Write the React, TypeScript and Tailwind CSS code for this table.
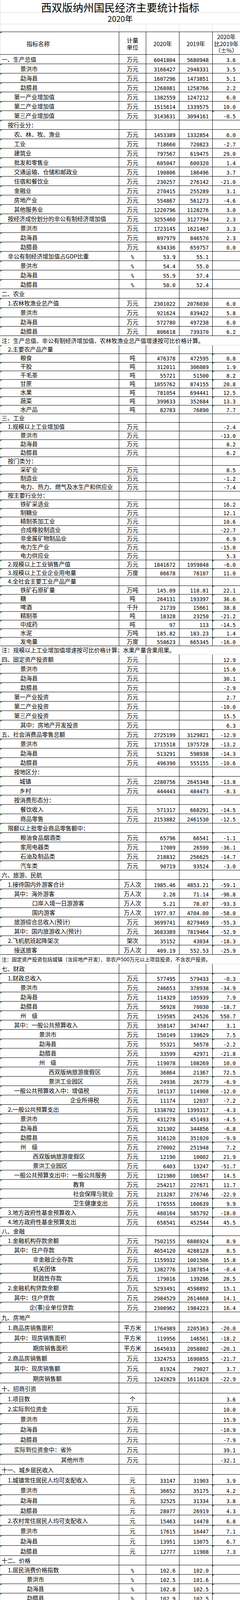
type Row = {
  i?: number;
  n: string;
  u?: string;
  a?: string;
  b?: string;
  p?: string;
  k?: "sec" | "note" | "small" | "end";
  t?: boolean;
};

type Group = { h: number; pt: boolean; rows: Row[] };

const S = (n: string, u = "", a = "", b = "", p = ""): Row => ({ i: 3, n, u, a, b, p, k: "sec" });
const R = (i: number, n: string, u = "", a = "", b = "", p = ""): Row => ({ i, n, u, a, b, p });
const N = (n: string, small = false): Row => ({ n, k: small ? "small" : "note" });

const PL: Record<number, string> = {
  3: "pl-[3px]",
  19: "pl-[19px]",
  36: "pl-[35px]",
  50: "pl-[49px]",
  52: "pl-[51px]",
  68: "pl-[67.5px]",
  75: "pl-[74px]",
  82: "pl-[81px]",
  84: "pl-[83px]",
  100: "pl-[99px]",
  124: "pl-[123.5px]",
  132: "pl-[131px]",
  148: "pl-[147px]",
  156: "pl-[155px]",
  179: "pl-[178.5px]",
  187: "pl-[186px]",
};

const H: Record<number, string> = {
  22: "h-[22px]",
  24: "h-[24px]",
  25: "h-[25px]",
  26: "h-[26px]",
};

const CITY = (i: number, unit: string, vals: [string, string, string][]) =>
  ["景洪市", "勐海县", "勐腊县"].map((n, k) => R(i, n, unit, ...vals[k]));

const GROUPS: Group[] = [
  {
    h: 24,
    pt: false,
    rows: [
      S("一、生产总值", "万元", "6041804", "5680948", "3.6"),
      ...CITY(52, "万元", [
        ["3166427", "2948331", "3.5"],
        ["1607296", "1473851", "5.1"],
        ["1268081", "1258766", "2.2"],
      ]),
      R(36, "第一产业增加值", "万元", "1382559", "1247212", "6.0"),
      R(36, "第二产业增加值", "万元", "1515614", "1339575", "10.0"),
      { ...R(36, "第三产业增加值", "万元", "3143631", "3094161", "-0.5"), t: true },
      R(19, "按行业分："),
      R(36, "农、林、牧、渔业", "万元", "1453389", "1332854", "6.0"),
      R(36, "工业", "万元", "718660", "720823", "-2.7"),
      R(36, "建筑业", "万元", "797567", "619475", "29.0"),
      R(36, "批发和零售业", "万元", "605047", "600320", "1.4"),
      R(36, "交通运输、仓储和邮政业", "万元", "190806", "186496", "3.7"),
      R(36, "住宿和餐饮业", "万元", "230257", "276142", "-21.0"),
      R(36, "金融业", "万元", "270415", "255289", "3.1"),
      R(36, "房地产业", "万元", "554867", "561273", "-4.6"),
      R(36, "其他服务业", "万元", "1220796", "1128276", "3.0"),
      R(19, "按经济成份划分的非公有制经济增加值", "万元", "3255460", "3127794", "2.3"),
      ...CITY(52, "万元", [
        ["1723145", "1621467", "3.3"],
        ["897979", "846570", "2.3"],
        ["634336", "659757", "0.0"],
      ]),
      R(19, "非公有制经济增加值占GDP比重", "%", "53.9", "55.1"),
      ...CITY(52, "%", [
        ["54.4", "55.0", ""],
        ["55.9", "57.4", ""],
        ["50.0", "52.4", ""],
      ]),
      S("二、农业"),
      R(19, "1.农林牧渔业总产值", "万元", "2301022", "2076030", "6.0"),
      ...CITY(52, "万元", [
        ["921624", "839422", "5.8"],
        ["572780", "497238", "6.0"],
        ["806618", "739370", "6.2"],
      ]),
      N("注：生产总值、非公有制经济增加值、农林牧渔业总产值增速按可比价格计算。"),
    ],
  },
  {
    h: 22,
    pt: true,
    rows: [
      R(19, "2.主要农产品产量"),
      R(52, "粮食", "吨", "476378", "472595", "0.8"),
      R(52, "干胶", "吨", "312011", "306089", "1.9"),
      R(52, "干毛茶", "吨", "55721", "51500", "8.2"),
      R(52, "甘蔗", "吨", "1055762", "874155", "20.8"),
      R(52, "水果", "吨", "781054", "694441", "12.5"),
      R(52, "蔬菜", "吨", "399633", "352684", "13.3"),
      R(52, "水产品", "吨", "82783", "76890", "7.7"),
      S("三、工业"),
      R(19, "1.规模以上工业增加值", "万元", "", "", "-2.4"),
      ...CITY(52, "万元", [
        ["", "", "-13.0"],
        ["", "", "8.2"],
        ["", "", "6.2"],
      ]),
      R(19, "按门类分："),
      R(52, "采矿业", "万元", "", "", "8.5"),
      R(52, "制造业", "万元", "", "", "-1.2"),
      R(52, "电力、热力、燃气及水生产和供应业", "万元", "", "", "-7.4"),
      R(19, "按主要行业分："),
      R(52, "铁矿采选业", "万元", "", "", "16.2"),
      R(52, "制糖业", "万元", "", "", "12.1"),
      R(52, "精制茶加工业", "万元", "", "", "10.6"),
      R(52, "合成橡胶制造业", "万元", "", "", "-22.7"),
      R(52, "非金属矿物制品业", "万元", "", "", "6.9"),
      R(52, "电力生产业", "万元", "", "", "-15.0"),
      R(52, "电力供应业", "万元", "", "", "5.3"),
      R(19, "2.规模以上工业销售产值", "万元", "1841672", "1959848", "-6.0"),
      R(19, "3.规模以上工业企业用电量", "万度", "86678", "78107", "11.0"),
      R(19, "4.全社会主要工业产品产量"),
      R(52, "铁矿石原矿量", "万吨", "145.09", "118.81", "22.1"),
      R(52, "糖", "吨", "264131", "193397", "36.6"),
      R(52, "啤酒", "千升", "21739", "15661", "38.8"),
      R(52, "精制茶", "吨", "18328", "23250", "-21.2"),
      R(52, "中成药", "吨", "97", "113", "-14.5"),
      R(52, "水泥", "万吨", "185.82", "183.23", "1.4"),
      R(52, "发电量", "万度", "558623", "665345", "-16.0"),
      N("注：规模以上工业增加值增速按可比价格计算；水果产量含果用果。"),
    ],
  },
  {
    h: 24,
    pt: true,
    rows: [
      S("四、固定资产投资额", "万元", "", "", "12.9"),
      ...CITY(52, "万元", [
        ["", "", "15.6"],
        ["", "", "30.1"],
        ["", "", "-2.9"],
      ]),
      R(36, "第一产业投资", "万元", "", "", "2.7"),
      R(36, "第二产业投资", "万元", "", "", "-10.0"),
      R(36, "第三产业投资", "万元", "", "", "15.5"),
      R(52, "其中：房地产开发投资", "万元", "", "", "6.3"),
      S("五、社会消费品零售总额", "万元", "2725199", "3129821", "-12.9"),
      ...CITY(52, "万元", [
        ["1715518", "1975728", "-13.2"],
        ["513291", "598938", "-14.3"],
        ["496390", "555155", "-10.6"],
      ]),
      R(36, "按地区分："),
      R(50, "城镇", "万元", "2280756", "2645348", "-13.8"),
      R(50, "乡村", "万元", "444443", "484473", "-8.3"),
      R(36, "按消费形态分："),
      R(52, "餐饮收入", "万元", "571317", "668291", "-14.5"),
      R(52, "商品零售", "万元", "2153882", "2461530", "-12.5"),
      R(19, "限额以上批零业商品零售额中："),
      R(52, "粮油食品烟酒类", "万元", "65796", "66541", "-1.1"),
      R(52, "家用电器类", "万元", "17009", "26599", "-36.1"),
      R(52, "石油及制品类", "万元", "218832", "256625", "-14.7"),
      R(52, "汽车类", "万元", "90719", "93524", "-3.0"),
      S("六、旅游、民航"),
      R(19, "1.接待国内外游客合计", "万人次", "1985.46", "4853.21", "-59.1"),
      R(36, "其中：海外游客", "万人次", "2.28", "71.14", "-96.8"),
      R(82, "口岸入境一日游游客", "万人次", "5.21", "78.07", "-93.3"),
      R(82, "国内游客", "万人次", "1977.97", "4704.00", "-58.0"),
      R(36, "旅游综合总收入(预计)", "万元", "3699741", "8279469", "-55.3"),
      R(36, "其中：国内旅游收入(预计)", "万元", "3683389", "7819464", "-52.9"),
      R(19, "2.飞机航班起降架次", "架次", "35152", "43034", "-18.3"),
      R(36, "接送旅客", "万人次", "409.19", "552.53", "-25.9"),
      N("注：固定资产投资包括城镇（含房地产开发）、非农户500万元以上项目投资，不含农户投资。", true),
      S("七、财政"),
      R(19, "1.财政总收入", "万元", "577495", "579433", "-0.3"),
      ...CITY(52, "万元", [
        ["246653", "378938", "-34.9"],
        ["114329", "105939", "7.9"],
        ["56928", "70030", "-18.7"],
      ]),
      R(52, "州　级", "万元", "159585", "24526", "550.7"),
      R(36, "其中：一般公共预算收入", "万元", "358147", "347447", "3.1"),
      ...CITY(100, "万元", [
        ["150149", "139629", "7.5"],
        ["55321", "56578", "-2.2"],
        ["33599", "42971", "-21.8"],
      ]),
      R(100, "州　级", "万元", "119078", "108269", "10.0"),
      R(124, "西双版纳旅游度假区", "万元", "36864", "21367", "72.5"),
      R(124, "景洪工业园区", "万元", "24936", "26779", "-6.9"),
      R(36, "一般公共预算收入中：增值税", "万元", "101137", "114908", "-12.0"),
      R(179, "企业所得税", "万元", "11174", "12037", "-7.2"),
      R(19, "2.一般公共预算支出", "万元", "1338702", "1399317", "-4.3"),
      ...CITY(52, "万元", [
        ["431278", "451493", "-4.5"],
        ["321302", "344856", "-6.8"],
        ["316120", "351020", "-9.9"],
      ]),
      R(52, "州　级", "万元", "270002", "251948", "7.2"),
      R(84, "西双版纳旅游度假区", "万元", "12190", "10002", "21.9"),
      R(84, "景洪工业园区", "万元", "6403", "13247", "-51.7"),
      R(36, "一般公共预算支出中：一般公共服务", "万元", "121980", "106547", "14.5"),
      R(187, "教育", "万元", "254217", "227671", "11.7"),
      R(187, "社会保障与就业", "万元", "213287", "276746", "-22.9"),
      R(187, "卫生健康支出", "万元", "176555", "160639", "9.9"),
      R(19, "3.地方政府性基金预算收入", "万元", "480164", "585792", "-18.0"),
      R(19, "4.地方政府性基金预算支出", "万元", "658541", "452544", "45.5"),
      S("八、金融"),
      R(19, "1.金融机构存款余额", "万元", "7502155", "6886924", "8.9"),
      R(36, "其中：住户存款", "万元", "4654120", "4288128", "8.5"),
      R(84, "非金融企业存款", "万元", "1159932", "1001506", "15.8"),
      R(84, "机关团体", "万元", "1382776", "1387854", "-0.4"),
      R(84, "财政性存款", "万元", "179016", "139286", "28.5"),
    ],
  },
  {
    h: 25,
    pt: true,
    rows: [
      R(19, "2.金融机构贷款余额", "万元", "5293491", "4598892", "15.1"),
      R(36, "其中：住户贷款", "万元", "2984529", "2614668", "14.1"),
      R(75, "企(事)业单位贷款", "万元", "2308962", "1984223", "16.4"),
    ],
  },
  {
    h: 26,
    pt: true,
    rows: [
      S("九、房地产"),
      R(19, "1.商品房销售面积", "平方米", "1764989", "2205363", "-20.0"),
      R(36, "其中：现房销售面积", "平方米", "119956", "146561", "-18.2"),
      R(84, "期房销售面积", "平方米", "1645033", "2058802", "-20.1"),
      R(19, "2.商品房销售额", "万元", "1324753", "1690855", "-21.7"),
      R(36, "其中：现房销售额", "万元", "81924", "79027", "3.7"),
      R(84, "期房销售额", "万元", "1242829", "1611828", "-22.9"),
      S("十、招商引资"),
      R(19, "1.项目数", "个", "", "", "3.6"),
      R(19, "2.实际到位资金", "万元", "", "", "10.0"),
      ...CITY(52, "万元", [
        ["", "", "15.9"],
        ["", "", "-10.9"],
        ["", "", "-7.9"],
      ]),
      R(36, "实际到位资金中：省外", "万元", "", "", "39.1"),
      R(156, "其他州市", "万元", "", "", "-32.1"),
      S("十一、城乡居民收入"),
      R(19, "1.城镇常住居民人均可支配收入", "元", "33147", "31903", "3.9"),
      ...CITY(52, "元", [
        ["36652", "35175", "4.2"],
        ["32525", "31334", "3.8"],
        ["28077", "26919", "4.3"],
      ]),
      R(19, "2.农村常住居民人均可支配收入", "元", "15463", "14478", "6.8"),
      ...CITY(52, "元", [
        ["17615", "16447", "7.1"],
        ["13951", "13075", "6.7"],
        ["12777", "11908", "7.3"],
      ]),
    ],
  },
  {
    h: 24,
    pt: true,
    rows: [
      S("十二、价格"),
      R(19, "1.居民消费价格指数", "%", "102.6", "102.0"),
      ...CITY(68, "%", [
        ["102.5", "101.6", ""],
        ["102.8", "102.5", ""],
        ["102.9", "102.5", ""],
      ]),
      R(52, "其中：服务价格指数", "%", "100.0", "102.1"),
      R(52, "其中：非食品价格指数", "%", "101.0", "100.9"),
      R(36, "①食品烟酒", "%", "107.4", "104.8"),
      R(52, "其中：食品", "%", "108.8", "106.5"),
      R(68, "食品中：粮食", "%", "101.0", "99.9"),
      R(132, "菜", "%", "92.7", "102.7"),
      R(132, "畜肉", "%", "137.5", "116.3"),
      R(132, "干鲜瓜果", "%", "89.6", "105.9"),
      R(52, "其中：在外餐饮", "%", "107.2", "102.6"),
      R(36, "②衣着", "%", "108.7", "99.1"),
      R(36, "③居住", "%", "100.4", "102.0"),
      R(36, "④生活用品及服务", "%", "98.5", "98.8"),
      R(36, "⑤交通和通信", "%", "96.4", "98.2"),
      R(36, "⑥教育文化和娱乐", "%", "99.2", "102.7"),
      R(36, "⑦医疗保健", "%", "100.9", "102.5"),
      R(36, "⑧其他用品和服务", "%", "103.5", "102.6"),
      R(19, "2.商品零售价格指数", "%", "101.9", "100.7"),
      R(19, "3.农业生产资料价格指数", "%", "102.4", "101.8"),
      R(19, "4.工业生产者出厂价格指数", "%", "101.0", "103.5"),
      R(36, "按轻重工业分：轻工业", "%", "100.3", "105.3"),
      R(148, "重工业", "%", "101.6", "102.5"),
      R(36, "按生产生活资料分：生产资料", "%", "101.6", "102.5"),
      R(179, "生活资料", "%", "100.3", "105.2"),
      R(19, "5.工业生产者购进价格指数", "%", "100.3", "102.2"),
      S("十三、机动车"),
      R(19, "1.机动车保有量", "辆", "518315", "514566", "0.7"),
      R(36, "其中：小型载客汽车", "辆", "175132", "163162", "7.3"),
      R(84, "轻型载货汽车", "辆", "40640", "38042", "6.8"),
      R(84, "摩托车", "辆", "296152", "307036", "-3.5"),
      R(19, "2.机动车新注册数", "辆", "60741", "48516", "25.2"),
      R(36, "其中：小型载客汽车", "辆", "13076", "15705", "-16.7"),
      R(84, "轻型载货汽车", "辆", "3806", "4226", "-9.9"),
      R(84, "摩托车", "辆", "43374", "27872", "55.6"),
    ],
  },
  { h: 24, pt: false, rows: [{ n: "注：机动车部分不含拖拉机。", k: "end" }] },
];

const COLS = "grid grid-cols-[304px_69px_85px_85px_70px] border-l border-l-[#d9d9d9]";
const MONO = "font-['DejaVu_Sans_Mono',monospace] text-[13.2px] leading-[16px]";

function Tri() {
  return (
    <span className="absolute top-0 left-0 h-0 w-0 border-t-[4px] border-r-[4px] border-t-[#1f7a3d] border-r-transparent" />
  );
}

function Num({ v, last }: { v?: string; last?: boolean }) {
  return (
    <div
      className={`flex items-end justify-end ${MONO} ${last ? "pr-[11px]" : "border-r border-r-black pr-[9px]"}`}
    >
      {v}
    </div>
  );
}

function DataRow({ row, h, pt }: { row: Row; h: number; pt: boolean }) {
  if (row.k === "note" || row.k === "small") {
    return (
      <div
        className={`flex items-end whitespace-nowrap border-b border-b-[#d9d9d9] border-l border-l-[#d9d9d9] pb-[2px] pl-[3px] leading-[18px] ${H[h]} ${row.k === "small" ? "text-[13px]" : "text-[14.8px]"}`}
      >
        {row.n}
      </div>
    );
  }
  if (row.k === "end") {
    return (
      <div className={`${COLS} ${H[h]}`}>
        <div className="flex items-end whitespace-nowrap border-r border-r-[#d9d9d9] pb-[3px] pl-[3px] text-[13px] leading-[18px]">
          {row.n}
        </div>
        <div className="border-r border-r-[#d9d9d9]" />
        <div className="border-r border-r-[#d9d9d9]" />
        <div className="border-r border-r-[#d9d9d9]" />
        <div />
      </div>
    );
  }
  const pctTri = row.t || (pt && !!row.a);
  return (
    <div className={`${COLS} ${H[h]} border-b border-b-black`}>
      <div
        className={`relative flex items-end whitespace-nowrap border-r border-r-black pb-[2px] text-[14.8px] leading-[18px] ${PL[row.i ?? 3]}`}
      >
        {row.k !== "sec" && <Tri />}
        {row.n}
      </div>
      {row.u === "%" ? (
        <div className={`flex items-end justify-center border-r border-r-black ${MONO}`}>%</div>
      ) : (
        <div className="flex items-end justify-center border-r border-r-black pb-[2px] text-[14.8px] leading-[18px]">
          {row.u}
        </div>
      )}
      <Num v={row.a} />
      <Num v={row.b} />
      <div className={`relative flex items-end justify-end pr-[11px] ${MONO}`}>
        {pctTri && <Tri />}
        {row.p}
      </div>
    </div>
  );
}

export default function App() {
  return (
    <div className="w-[614px] bg-white text-black font-['Noto_Sans_CJK_SC',sans-serif]">
      <div className="flex h-[33px] items-end justify-center border-b border-b-[#d9d9d9] border-l border-l-[#d9d9d9] text-[27px] leading-[27px]">
        西双版纳州国民经济主要统计指标
      </div>
      <div className="flex h-[29px] items-end justify-center border-b border-b-[#d9d9d9] border-l border-l-[#d9d9d9] pb-[3px] text-[20px] leading-[20px]">
        2020年
      </div>
      <div className={`${COLS} h-[20px] border-b border-b-black`}>
        <div className="border-r border-r-[#d9d9d9]" />
        <div className="border-r border-r-[#d9d9d9]" />
        <div className="border-r border-r-[#d9d9d9]" />
        <div className="border-r border-r-[#d9d9d9]" />
        <div />
      </div>
      <div className={`${COLS} h-[58px] border-b border-b-black text-[14.8px]`}>
        <div className="relative flex items-center border-r border-r-black pt-[3px] pl-[67px]">
          <Tri />
          指标名称
        </div>
        <div className="flex flex-col items-center justify-center border-r border-r-black pt-[2px] leading-[18px]">
          <span>计量</span>
          <span>单位</span>
        </div>
        <div className="flex items-center justify-center border-r border-r-black pt-[3px]">2020年</div>
        <div className="flex items-center justify-center border-r border-r-black pt-[3px]">2019年</div>
        <div className="flex flex-col items-center justify-center pt-[2px] leading-[17.5px]">
          <span>2020年</span>
          <span>比2019年</span>
          <span>（±%）</span>
        </div>
      </div>
      {GROUPS.map((g, gi) =>
        g.rows.map((row, ri) => <DataRow key={`${gi}-${ri}`} row={row} h={g.h} pt={g.pt} />),
      )}
    </div>
  );
}
